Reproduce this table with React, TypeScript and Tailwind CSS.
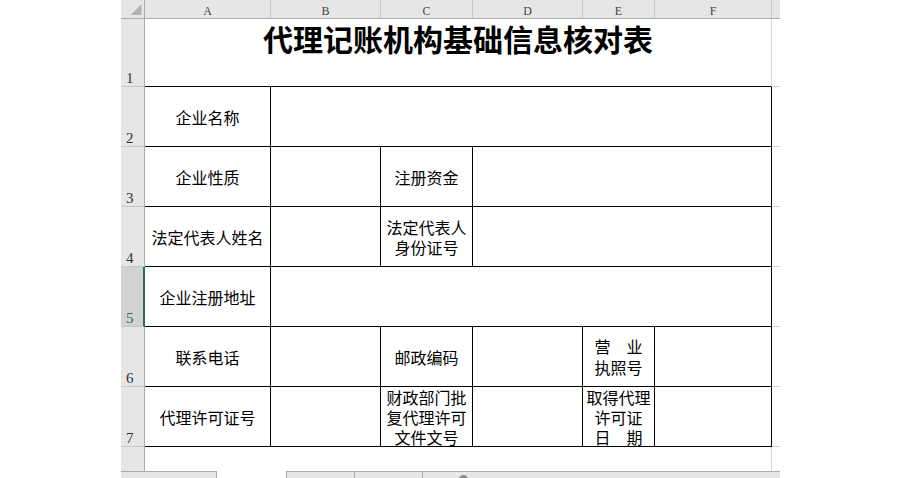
import React from "react";

const cjk = "font-['Noto_Sans_CJK_SC',sans-serif]";
const serif = "font-['Liberation_Serif',serif]";

const colHead =
  "flex items-end justify-center pb-[1px] bg-[#e6e6e6] border-r border-b border-r-[#c6c6c6] border-b-[#ababab] text-[12px] leading-[12px] text-[#444] " +
  serif;
const rowHead =
  "flex items-end pl-[5px] bg-[#e6e6e6] border-r border-b border-r-[#ababab] border-b-[#c8c8c8] text-[15px] leading-[15px] text-[#333] " +
  serif;
const rowHeadSel =
  "flex items-end pl-[5px] bg-[#d2d2d2] border-r-2 border-b border-r-[#217346] border-b-[#c8c8c8] text-[15px] leading-[15px] text-[#217346] " +
  serif;
const label =
  "flex items-center justify-center text-center border-r border-b border-black text-[16px] leading-[20px] whitespace-nowrap text-black " +
  cjk;
const data = "border-r border-b border-black";
const tick = "border-b border-[#d4d4d4]";

function RowH({ n, sel }: { n: string; sel?: boolean }) {
  return <div className={sel ? rowHeadSel : rowHead}>{n}</div>;
}

export default function App() {
  return (
    <div className="w-[900px] h-[478px] bg-white overflow-hidden pl-[121px]">
      <div className="grid w-[659px] grid-cols-[24px_126px_110px_92px_110px_72px_117px_8px] grid-rows-[19px_68px_60px_60px_60px_60px_60px_60px_24px]">
        {/* header row */}
        <div className="relative bg-[#e6e6e6] border-r border-b border-[#ababab]">
          <svg className="absolute left-0 top-0" width="23" height="18" viewBox="0 0 23 18">
            <polygon points="20.5,4 20.5,15 9.5,15" fill="#b4b4b4" />
          </svg>
        </div>
        <div className={colHead}>A</div>
        <div className={colHead}>B</div>
        <div className={colHead}>C</div>
        <div className={colHead}>D</div>
        <div className={colHead}>E</div>
        <div className={colHead + " border-r-[#ababab]"}>F</div>
        <div className="bg-[#e6e6e6] border-b border-[#ababab]" />

        {/* row 1 */}
        <RowH n="1" />
        <div
          className={
            "col-span-6 flex justify-center items-start pt-[4px] border-r border-b border-r-[#d4d4d4] border-b-black text-[30px] leading-[30px] font-bold text-black whitespace-nowrap " +
            cjk
          }
        >
          代理记账机构基础信息核对表
        </div>
        <div className={tick} />

        {/* row 2 */}
        <RowH n="2" />
        <div className={label}>企业名称</div>
        <div className={data + " col-span-5"} />
        <div className={tick} />

        {/* row 3 */}
        <RowH n="3" />
        <div className={label}>企业性质</div>
        <div className={data} />
        <div className={label}>注册资金</div>
        <div className={data + " col-span-3"} />
        <div className={tick} />

        {/* row 4 */}
        <RowH n="4" />
        <div className={label}>法定代表人姓名</div>
        <div className={data} />
        <div className={label}>
          法定代表人
          <br />
          身份证号
        </div>
        <div className={data + " col-span-3"} />
        <div className={tick} />

        {/* row 5 */}
        <RowH n="5" sel />
        <div className={label}>企业注册地址</div>
        <div className={data + " col-span-5"} />
        <div className={tick} />

        {/* row 6 */}
        <RowH n="6" />
        <div className={label}>联系电话</div>
        <div className={data} />
        <div className={label}>邮政编码</div>
        <div className={data} />
        <div className={label + " leading-[21px]"}>
          营　业
          <br />
          执照号
        </div>
        <div className={data} />
        <div className={tick} />

        {/* row 7 */}
        <RowH n="7" />
        <div className={label}>代理许可证号</div>
        <div className={data} />
        <div className={label}>
          财政部门批
          <br />
          复代理许可
          <br />
          文件文号
        </div>
        <div className={data} />
        <div className={label}>
          取得代理
          <br />
          许可证
          <br />
          日　期
        </div>
        <div className={data} />
        <div className={tick} />

        {/* row 8 */}
        <div className="bg-[#e6e6e6] border-r border-[#ababab]" />
        <div className="col-span-6 border-r border-[#d4d4d4]" />
        <div />
      </div>

      {/* sheet tab bar */}
      <div className="flex h-[7px] w-[659px]">
        <div className="w-[96px] bg-[#e6e6e6] border-t border-r border-[#ababab]" />
        <div className="w-[69px] bg-white" />
        <div className="relative flex-1 flex bg-[#e6e6e6] border-t border-l border-[#ababab]">
          <div className="w-[68px] border-r border-[#ababab]" />
          <div className="w-[68px] border-r border-[#ababab]" />
          <div className="ml-[36px] mt-[3px] w-[9px] h-[9px] rounded-full bg-[#8a8a8a]" />
        </div>
      </div>
    </div>
  );
}
